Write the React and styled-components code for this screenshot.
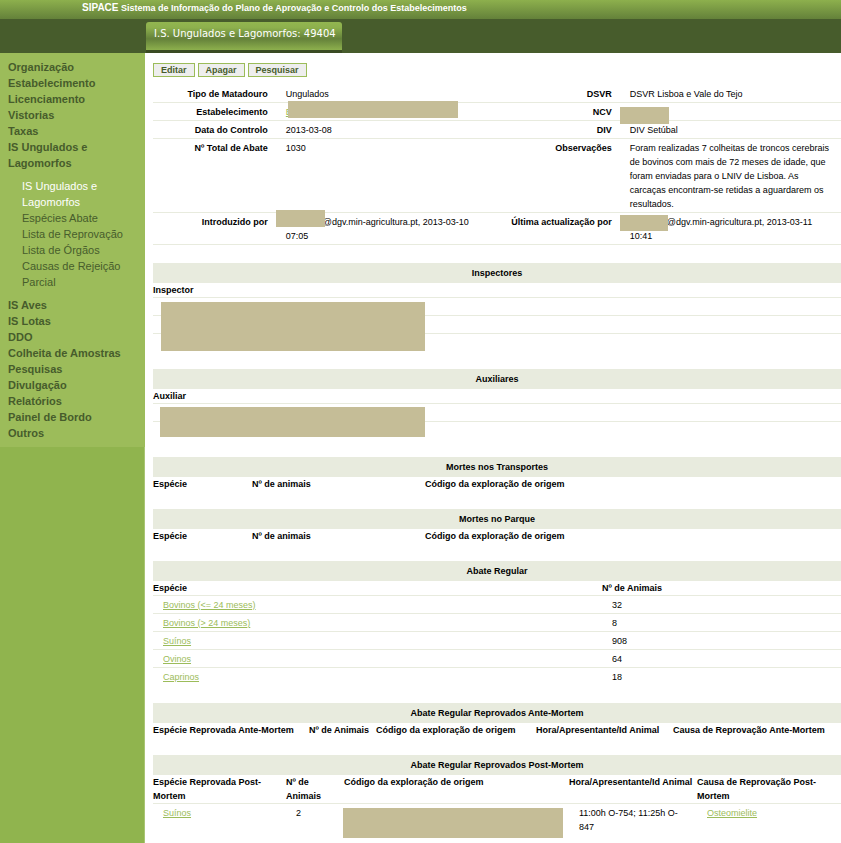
import React from "react";
import styled, { createGlobalStyle } from "styled-components";

const GlobalStyle = createGlobalStyle`
  * {
    box-sizing: border-box;
  }
  body {
    margin: 0;
    background: #ffffff;
    color: #000000;
    font-family: "Liberation Sans", Arial, sans-serif;
    font-size: 9px;
    line-height: 14px;
  }
`;

const Page = styled.div`
  min-height: 100vh;
  display: flex;
  flex-direction: column;
`;

const TopBar = styled.header`
  height: 19px;
  padding: 1px 0 0 82px;
  background: linear-gradient(#8db04d, #64813a);
  color: #ffffff;
  font-weight: bold;
  white-space: nowrap;
`;

const Brand = styled.span`
  font-size: 10px;
`;

const TabBar = styled.nav`
  height: 34px;
  padding: 3px 0 0 146px;
  background: #475c2c;
`;

const Tab = styled.a`
  display: inline-block;
  height: 28px;
  padding: 0 6px 0 8px;
  border-radius: 3px 3px 0 0;
  background: linear-gradient(#92b650, #8db04d 20%, #64813a 60%, #8db04d);
  box-shadow: 0 3px 0 #3a4b23;
  color: #ffffff;
  font-family: "DejaVu Sans", Verdana, sans-serif;
  font-size: 10px;
  line-height: 24px;
  text-decoration: none;
  white-space: nowrap;
`;

const Body = styled.div`
  flex: 1;
  display: flex;
`;

const Sidebar = styled.aside`
  flex: 0 0 145px;
  background: #90b44e;
  border-right: 1px solid #a9c574;
`;

const Menu = styled.ul`
  margin: 0 -1px 0 0;
  padding: 6px 8px;
  list-style: none;
  background: #9cbc5a;
  font-size: 11px;
  line-height: 16px;
`;

const SubMenu = styled.ul`
  margin: 0;
  padding: 7px 0 7px 14px;
  list-style: none;
`;

const MenuLink = styled.a`
  display: block;
  color: ${(props) => (props.$active ? "#ffffff" : "#475c2c")};
  font-weight: ${(props) => (props.$sub ? "normal" : "bold")};
  text-decoration: none;
`;

const Content = styled.main`
  flex: 1;
  min-width: 0;
  padding: 10px 0 0 8px;
`;

const Toolbar = styled.div`
  display: flex;
  gap: 3px;
  margin-bottom: 8px;
`;

const ToolButton = styled.button`
  height: 14px;
  padding: 0 7px;
  border: 1px solid #9cbc5a;
  background: #eeeeee;
  color: #475c2c;
  font-family: inherit;
  font-size: 9px;
  font-weight: bold;
  line-height: 12px;
`;

const Details = styled.table`
  width: 100%;
  margin-bottom: 18px;
  table-layout: fixed;
  border-collapse: separate;
  border-spacing: 0;

  th,
  td {
    position: relative;
    border-bottom: 1px solid #e8ebde;
    vertical-align: top;
  }
  th {
    width: 18%;
    padding: 2px 9px 1px;
    text-align: right;
    white-space: nowrap;
  }
  td {
    width: 32%;
    padding: 2px 10px 1px 9px;
  }
`;

const DataTable = styled.table`
  width: 100%;
  margin-bottom: 17px;
  table-layout: fixed;
  border-collapse: separate;
  border-spacing: 0;
`;

const TableTitle = styled.caption`
  height: 20px;
  padding: 3px 0;
  background: #e8ebde;
  font-weight: bold;
`;

const HeadCell = styled.th`
  width: ${(props) => props.$width || "auto"};
  padding: 0;
  border-bottom: 1px solid ${(props) => (props.$line ? "#e8ebde" : "transparent")};
  text-align: left;
  vertical-align: top;
`;

const Cell = styled.td`
  position: relative;
  height: 18px;
  padding: 2px 10px 1px;
  border-bottom: 1px solid ${(props) => (props.$last ? "transparent" : "#e8ebde")};
  vertical-align: top;
`;

const Link = styled.a`
  color: #9cbc5a;
  text-decoration: underline;
`;

// Block that hides private data
const Mask = styled.span`
  position: absolute;
  z-index: 1;
  top: ${(props) => props.$top}px;
  left: ${(props) => props.$left}px;
  width: ${(props) => props.$width}px;
  height: ${(props) => props.$height}px;
  background: #c5bd97;
`;

const HiddenUser = styled.span`
  display: inline-block;
  width: 37px;
`;

const menuTop = [
  "Organização",
  "Estabelecimento",
  "Licenciamento",
  "Vistorias",
  "Taxas",
  "IS Ungulados e Lagomorfos",
];

const subMenu = [
  "IS Ungulados e Lagomorfos",
  "Espécies Abate",
  "Lista de Reprovação",
  "Lista de Órgãos",
  "Causas de Rejeição",
  "Parcial",
];

const menuBottom = [
  "IS Aves",
  "IS Lotas",
  "DDO",
  "Colheita de Amostras",
  "Pesquisas",
  "Divulgação",
  "Relatórios",
  "Painel de Bordo",
  "Outros",
];

const deathColumns = [
  { label: "Espécie", width: "99px" },
  { label: "Nº de animais", width: "173px" },
  { label: "Código da exploração de origem" },
];

const anteColumns = [
  { label: "Espécie Reprovada Ante-Mortem", width: "156px" },
  { label: "Nº de Animais", width: "67px" },
  { label: "Código da exploração de origem", width: "160px" },
  { label: "Hora/Apresentante/Id Animal", width: "137px" },
  { label: "Causa de Reprovação Ante-Mortem" },
];

const postColumns = [
  { label: "Espécie Reprovada Post-Mortem", width: "133px" },
  { label: "Nº de Animais", width: "58px" },
  { label: "Código da exploração de origem", width: "225px" },
  { label: "Hora/Apresentante/Id Animal", width: "128px" },
  { label: "Causa de Reprovação Post-Mortem" },
];

const slaughter = [
  ["Bovinos (<= 24 meses)", 32],
  ["Bovinos (> 24 meses)", 8],
  ["Suínos", 908],
  ["Ovinos", 64],
  ["Caprinos", 18],
];

const Section = ({ title, columns, children }) => (
  <DataTable>
    <TableTitle>{title}</TableTitle>
    <thead>
      <tr>
        {columns.map((col) => (
          <HeadCell key={col.label} $width={col.width} $line={!!children} scope="col">
            {col.label}
          </HeadCell>
        ))}
      </tr>
    </thead>
    {children && <tbody>{children}</tbody>}
  </DataTable>
);

const SideMenu = () => (
  <Sidebar>
    <Menu>
      {menuTop.map((item) => (
        <li key={item}>
          <MenuLink href="#">{item}</MenuLink>
        </li>
      ))}
      <li>
        <SubMenu>
          {subMenu.map((item, i) => (
            <li key={item}>
              <MenuLink href="#" $sub $active={i === 0}>
                {item}
              </MenuLink>
            </li>
          ))}
        </SubMenu>
      </li>
      {menuBottom.map((item) => (
        <li key={item}>
          <MenuLink href="#">{item}</MenuLink>
        </li>
      ))}
    </Menu>
  </Sidebar>
);

const InspectionDetails = () => (
  <Details>
    <tbody>
      <tr>
        <th scope="row">Tipo de Matadouro</th>
        <td>Ungulados</td>
        <th scope="row">DSVR</th>
        <td>DSVR Lisboa e Vale do Tejo</td>
      </tr>
      <tr>
        <th scope="row">Estabelecimento</th>
        <td>
          <Link href="#">E</Link>
          <Mask $top={-2} $left={11} $width={170} $height={17} />
        </td>
        <th scope="row">NCV</th>
        <td>
          <Mask $top={4} $left={-1} $width={49} $height={17} />
        </td>
      </tr>
      <tr>
        <th scope="row">Data do Controlo</th>
        <td>2013-03-08</td>
        <th scope="row">DIV</th>
        <td>DIV Setúbal</td>
      </tr>
      <tr>
        <th scope="row">Nº Total de Abate</th>
        <td>1030</td>
        <th scope="row">Observações</th>
        <td>
          Foram realizadas 7 colheitas de troncos cerebrais de bovinos com mais de 72
          meses de idade, que foram enviadas para o LNIV de Lisboa. As carcaças
          encontram-se retidas a aguardarem os resultados.
        </td>
      </tr>
      <tr>
        <th scope="row">Introduzido por</th>
        <td>
          <Mask $top={-3} $left={-1} $width={49} $height={17} />
          <HiddenUser />
          @dgv.min-agricultura.pt, 2013-03-10 07:05
        </td>
        <th scope="row">Última actualização por</th>
        <td>
          <Mask $top={2} $left={-1} $width={48} $height={16} />
          <HiddenUser />
          @dgv.min-agricultura.pt, 2013-03-11 10:41
        </td>
      </tr>
    </tbody>
  </Details>
);

const App = () => {
  return (
    <Page>
      <GlobalStyle />
      <TopBar>
        <Brand>SIPACE</Brand> Sistema de Informação do Plano de Aprovação e Controlo dos
        Estabelecimentos
      </TopBar>
      <TabBar>
        <Tab href="#">I.S. Ungulados e Lagomorfos: 49404</Tab>
      </TabBar>
      <Body>
        <SideMenu />
        <Content>
          <Toolbar>
            <ToolButton type="button">Editar</ToolButton>
            <ToolButton type="button">Apagar</ToolButton>
            <ToolButton type="button">Pesquisar</ToolButton>
          </Toolbar>

          <InspectionDetails />

          <Section title="Inspectores" columns={[{ label: "Inspector" }]}>
            <tr>
              <Cell>
                <Mask $top={4} $left={8} $width={264} $height={49} />
              </Cell>
            </tr>
            <tr>
              <Cell />
            </tr>
            <tr>
              <Cell $last />
            </tr>
          </Section>

          <Section title="Auxiliares" columns={[{ label: "Auxiliar" }]}>
            <tr>
              <Cell>
                <Mask $top={3} $left={7} $width={265} $height={30} />
              </Cell>
            </tr>
            <tr>
              <Cell $last />
            </tr>
          </Section>

          <Section title="Mortes nos Transportes" columns={deathColumns} />
          <Section title="Mortes no Parque" columns={deathColumns} />

          <Section
            title="Abate Regular"
            columns={[{ label: "Espécie", width: "449px" }, { label: "Nº de Animais" }]}
          >
            {slaughter.map(([species, total], i) => (
              <tr key={species}>
                <Cell $last={i === slaughter.length - 1}>
                  <Link href="#">{species}</Link>
                </Cell>
                <Cell $last={i === slaughter.length - 1}>{total}</Cell>
              </tr>
            ))}
          </Section>

          <Section title="Abate Regular Reprovados Ante-Mortem" columns={anteColumns} />

          <Section title="Abate Regular Reprovados Post-Mortem" columns={postColumns}>
            <tr>
              <Cell $last>
                <Link href="#">Suínos</Link>
              </Cell>
              <Cell $last>2</Cell>
              <Cell $last>
                <Mask $top={4} $left={-1} $width={220} $height={30} />
              </Cell>
              <Cell $last>11:00h O-754; 11:25h O-847</Cell>
              <Cell $last>
                <Link href="#">Osteomielite</Link>
              </Cell>
            </tr>
          </Section>
        </Content>
      </Body>
    </Page>
  );
};

export default App;
